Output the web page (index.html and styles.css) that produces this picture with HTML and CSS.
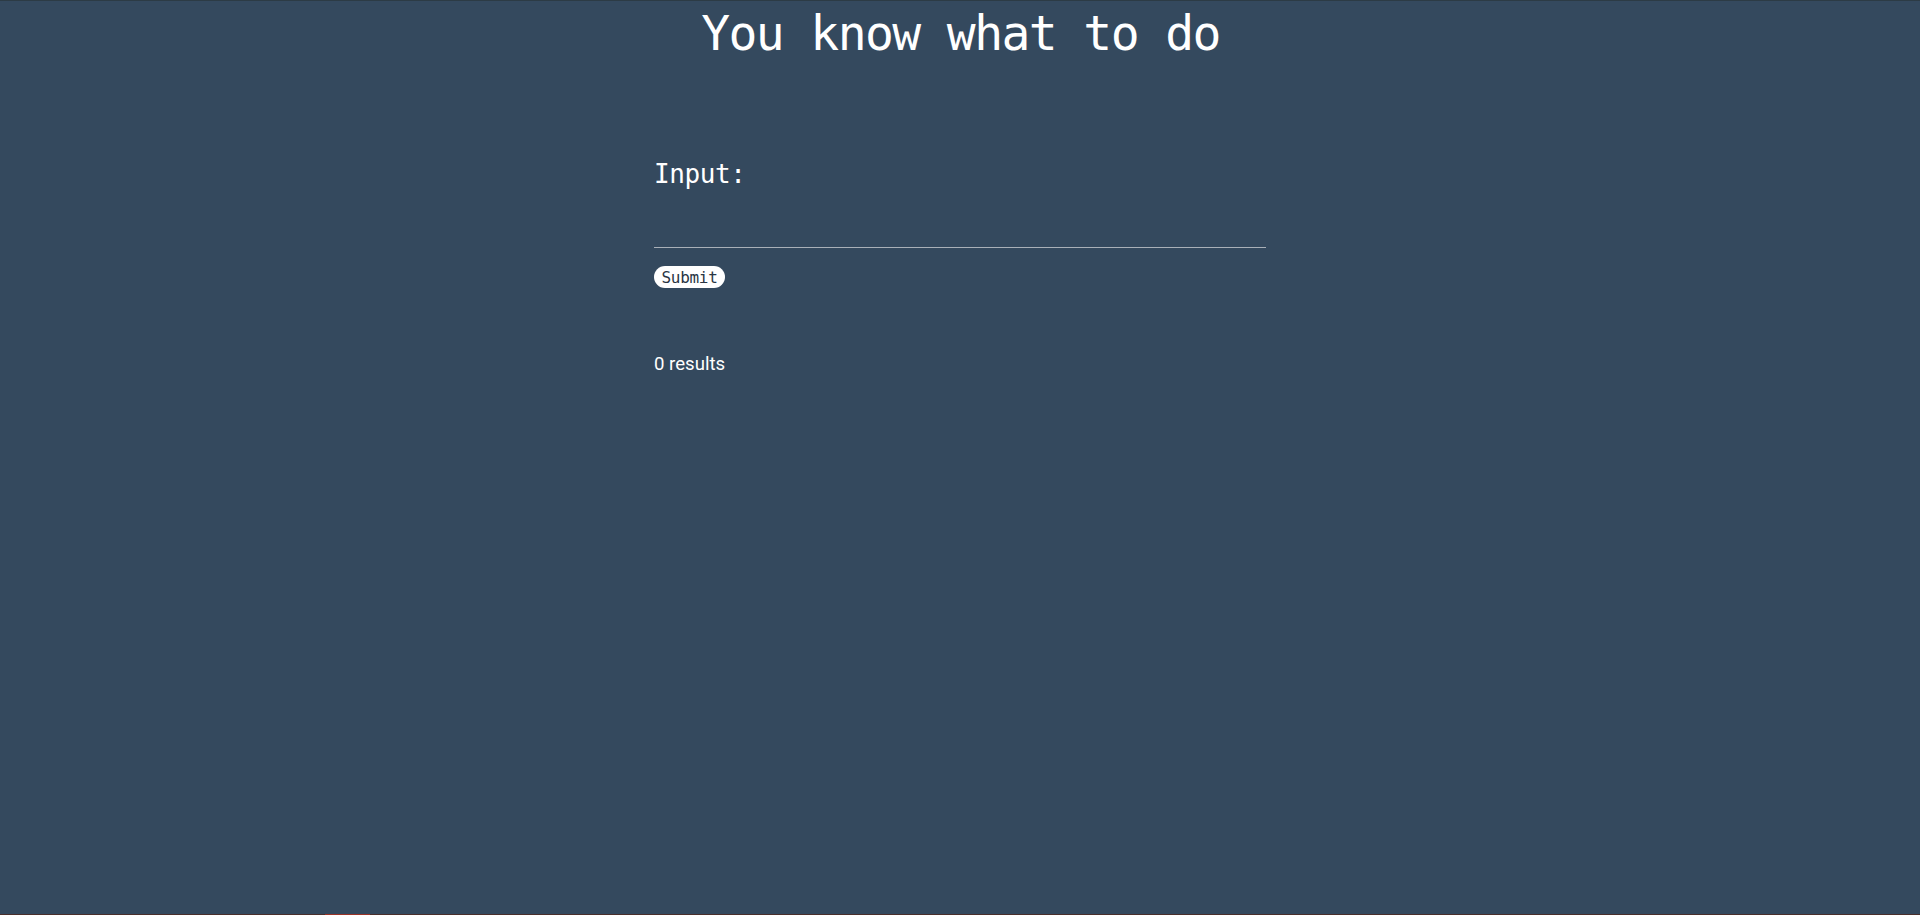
FILE: index.html
```html
<!DOCTYPE html>
<html lang="en">
<head>
<meta charset="utf-8">
<title>You know what to do</title>
<link rel="stylesheet" href="styles.css">
</head>
<body>
<div class="page">
  <h1 class="title">You know what to do</h1>
  <main class="panel">
    <form class="form">
      <label class="label" for="q">Input:</label>
      <input class="field" id="q" type="text">
      <button class="submit" type="button">Submit</button>
    </form>
    <p class="results">0 results</p>
  </main>
</div>
<div class="bottom-bar"><span class="bottom-mark"></span></div>
</body>
</html>
```

FILE: styles.css
```css
html, body {
  margin: 0;
  padding: 0;
}

body {
  background: #34495e;
  color: #ffffff;
  height: 915px;
  box-sizing: border-box;
  border-top: 1px solid #2c3b45;
  display: flex;
  flex-direction: column;
  overflow: hidden;
}

.page {
  flex: 1;
  display: flex;
  flex-direction: column;
  align-items: center;
}

.title {
  margin: 0;
  padding-top: 4px;
  padding-left: 1px;
  font-family: "DejaVu Sans Mono", monospace;
  font-weight: normal;
  font-size: 48px;
  letter-spacing: -1.6px;
  line-height: 56px;
  text-align: center;
}

.panel {
  width: 612px;
  padding-top: 98px;
}

.form {
  display: flex;
  flex-direction: column;
  align-items: flex-start;
}

.label {
  font-family: "DejaVu Sans Mono", monospace;
  font-size: 26px;
  letter-spacing: -0.4px;
  line-height: 30px;
}

.field {
  margin-top: 18px;
  width: 100%;
  height: 41px;
  box-sizing: border-box;
  background: transparent;
  border: none;
  border-bottom: 1px solid #a9b0b8;
  color: #ffffff;
  font-family: "DejaVu Sans Mono", monospace;
  font-size: 20px;
  outline: none;
  padding: 0;
}

.submit {
  margin-top: 18px;
  height: 22px;
  width: 71px;
  padding: 0;
  border: none;
  border-radius: 11px;
  background: #ffffff;
  color: #2a3644;
  font-family: "DejaVu Sans Mono", monospace;
  font-size: 16px;
  letter-spacing: -0.3px;
  line-height: 23px;
  text-align: center;
}

.results {
  margin: 65px 0 0;
  font-family: Roboto, "Liberation Sans", sans-serif;
  font-size: 18.6px;
  line-height: 22px;
}

.bottom-bar {
  height: 1px;
  background: #4a2f2c;
  display: flex;
}

.bottom-mark {
  margin-left: 325px;
  width: 45px;
  background: #9b3326;
}
```
